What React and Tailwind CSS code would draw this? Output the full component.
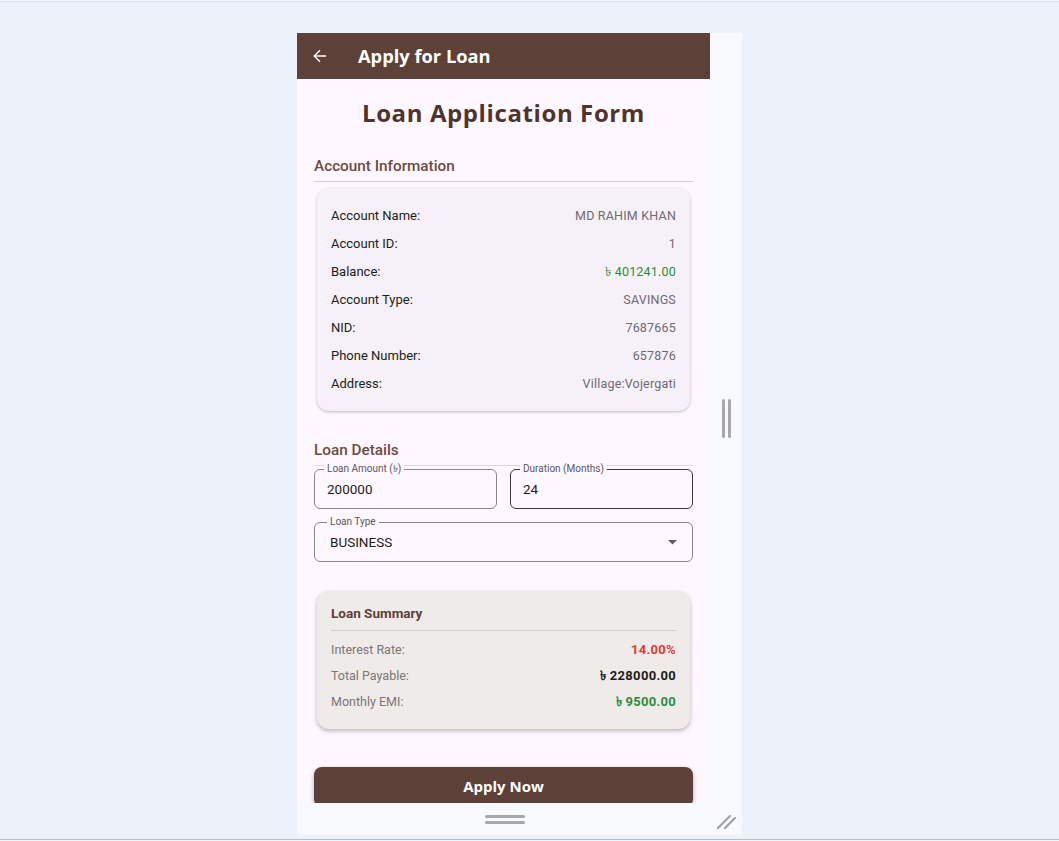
import React from "react";

const roboto = { fontFamily: "Roboto, 'Noto Sans', 'DejaVu Sans', sans-serif" };
const heading = { fontFamily: "'Open Sans', 'DejaVu Sans', sans-serif" };

function InfoRow({ label, value, valueClass = "text-[#6f6a70]" }) {
  return (
    <div className="flex h-[28px] items-center justify-between">
      <span className="text-[13px] text-[#1d1b20]">{label}</span>
      <span className={`text-[12.5px] tracking-[0.2px] ${valueClass}`}>{value}</span>
    </div>
  );
}

function SumRow({ label, value, valueClass }) {
  return (
    <div className="flex h-[26px] items-center justify-between">
      <span className="text-[12.5px] text-[#7a7577]">{label}</span>
      <span className={`text-[13px] font-bold tracking-[0.3px] ${valueClass}`}>{value}</span>
    </div>
  );
}

function Field({ label, value, className = "", labelClass = "left-[9px]", dark = false, children }) {
  return (
    <div
      className={`relative h-[40px] rounded-[6px] border ${
        dark ? "border-[#3c383d]" : "border-[#8a8590]"
      } flex items-center px-[12px] ${className}`}
    >
      <span
        className={`absolute -top-[7px] ${labelClass} bg-[#fef7ff] px-[3px] text-[10px] leading-[12px] text-[#5a5560]`}
      >
        {label}
      </span>
      <span className="text-[13.5px] text-[#1d1b20]">{value}</span>
      {children}
    </div>
  );
}

export default function App() {
  return (
    <div className="flex h-[841px] w-[1059px] flex-col overflow-hidden bg-[#edf1f9]" style={roboto}>
      <div className="h-px bg-[#f3f5fb]" />
      <div className="h-px bg-[#d9e2f5]" />
      <div className="flex-1 pl-[297px] pt-[31px]">
        <div className="flex w-[445px] flex-col">
          <div className="flex">
            {/* App column */}
            <div className="flex h-[770px] w-[413px] flex-col overflow-hidden bg-[#fef7ff]">
              <div className="flex h-[46px] shrink-0 items-center bg-[#5d4037]">
                <svg width="14" height="14" viewBox="0 0 14 14" className="ml-[16px]" fill="none">
                  <path d="M13 7H1.5M7 1.2L1.2 7L7 12.8" stroke="white" strokeWidth="1.4" />
                </svg>
                <span className="ml-[31px] text-[18.3px] font-bold text-white" style={heading}>
                  Apply for Loan
                </span>
              </div>

              <div className="flex flex-col px-[17px]">
                <div
                  className="mt-[20px] text-center text-[24px] font-bold leading-[28px] tracking-[0.6px] text-[#4e342e]"
                  style={heading}
                >
                  Loan Application Form
                </div>

                <div className="mt-[29px] h-[20px] text-[15.3px] font-medium leading-[20px] text-[#6d4c41]">
                  Account Information
                </div>
                <div className="mt-[5px] h-px bg-[#d2ccd4]" />

                <div className="mx-[3px] mt-[6px] rounded-[12px] bg-[#f6f1f8] px-[14px] pb-[13px] pt-[14px] shadow-[0_1px_3px_rgba(0,0,0,0.25)]">
                  <InfoRow label="Account Name:" value="MD RAHIM KHAN" />
                  <InfoRow label="Account ID:" value="1" />
                  <InfoRow label="Balance:" value="৳ 401241.00" valueClass="text-[#2e8b3a]" />
                  <InfoRow label="Account Type:" value="SAVINGS" />
                  <InfoRow label="NID:" value="7687665" />
                  <InfoRow label="Phone Number:" value="657876" />
                  <InfoRow label="Address:" value="Village:Vojergati" />
                </div>

                <div className="mt-[29px] h-[20px] text-[15.3px] font-medium leading-[20px] text-[#6d4c41]">
                  Loan Details
                </div>
                <div className="mt-[5px] h-px bg-[#dcd6de]" />

                <div className="mt-[3px] grid grid-cols-2 gap-[13px]">
                  <Field label="Loan Amount (৳)" value="200000" />
                  <Field label="Duration (Months)" value="24" dark />
                </div>

                <Field
                  label="Loan Type"
                  value="BUSINESS"
                  labelClass="left-[12px]"
                  className="mt-[13px] justify-between pl-[15px] pr-[15px]"
                >
                  <svg width="9" height="5" viewBox="0 0 9 5">
                    <path d="M0 0H9L4.5 4.5Z" fill="#5f5b62" />
                  </svg>
                </Field>

                <div className="mx-[3px] mt-[29px] rounded-[12px] bg-[#efebe9] px-[14px] pb-[14px] pt-[14px] shadow-[0_2px_4px_rgba(0,0,0,0.28)]">
                  <div className="h-[16px] text-[13.5px] font-bold leading-[16px] text-[#5d4037]">Loan Summary</div>
                  <div className="mt-[9px] h-px bg-[#d2ccd4]" />
                  <div className="mt-[6px]">
                    <SumRow label="Interest Rate:" value="14.00%" valueClass="text-[#e53935]" />
                    <SumRow label="Total Payable:" value="৳ 228000.00" valueClass="text-[#1d1b20]" />
                    <SumRow label="Monthly EMI:" value="৳ 9500.00" valueClass="text-[#2e8b3a]" />
                  </div>
                </div>

                <div
                  className="mt-[38px] flex h-[40px] shrink-0 items-center justify-center rounded-[8px] bg-[#5d4037] pb-[2px] text-[15px] font-bold text-white shadow-[0_2px_5px_rgba(0,0,0,0.3)]"
                  style={heading}
                >
                  Apply Now
                </div>
              </div>
            </div>

            {/* Right strip */}
            <div className="flex h-[770px] w-[32px] items-center justify-center gap-[3px] bg-[#f8f9fd]">
              <div className="h-[39px] w-[3px] rounded-full bg-[#a8a8a8]" />
              <div className="h-[39px] w-[3px] rounded-full bg-[#a8a8a8]" />
            </div>
          </div>

          {/* Bottom strip */}
          <div className="relative flex h-[32px] items-center justify-center bg-[#f8f9fd]">
            <div className="ml-[-29px] flex flex-col gap-[3px]">
              <div className="h-[3px] w-[40px] rounded-full bg-[#a8a8a8]" />
              <div className="h-[3px] w-[40px] rounded-full bg-[#a8a8a8]" />
            </div>
            <svg className="absolute right-[5px] top-[7px]" width="20" height="20" viewBox="0 0 20 20">
              <path d="M1 18L13 6M8 18L18 8" stroke="#a0a0a0" strokeWidth="2.2" strokeLinecap="round" />
            </svg>
          </div>
        </div>
      </div>
      <div className="h-px bg-[#b9bec8]" />
      <div className="h-px bg-[#f4f4f4]" />
    </div>
  );
}
